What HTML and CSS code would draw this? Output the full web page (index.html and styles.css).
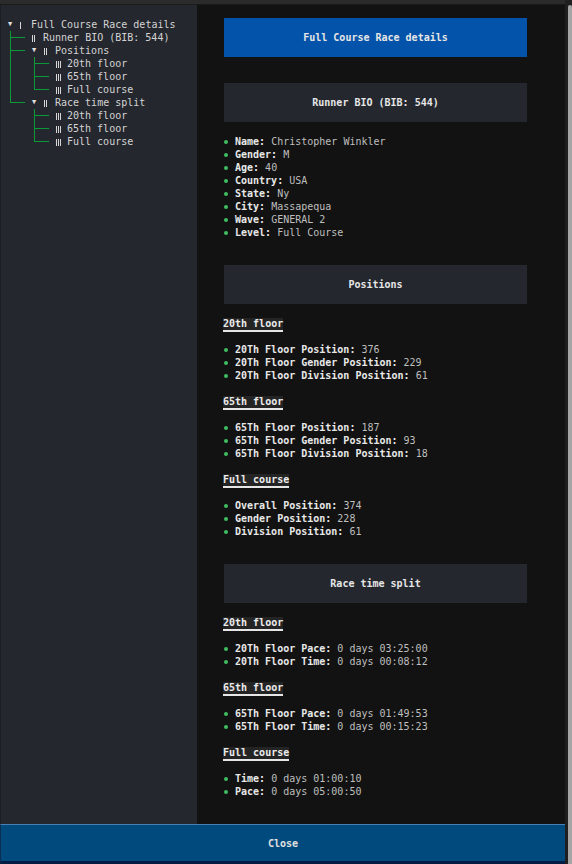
FILE: index.html
```html
<!DOCTYPE html>
<html>
<head>
<meta charset="utf-8">
<link rel="stylesheet" href="styles.css">
</head>
<body>
<div class="app">
  <div class="window">
    <div class="topbar"></div>
    <div class="panes">
      <aside class="sidebar">
        <div class="tree">
          <div class="row"><span class="arrow">▼</span><span class="sp"></span><span class="num n1" title="Ⅰ"></span><span class="sp"></span><span class="lbl">Full Course Race details</span></div>
          <div class="row"><span class="g g-tee"></span><span class="num n2" title="Ⅱ"></span><span class="sp"></span><span class="lbl">Runner BIO (BIB: 544)</span></div>
          <div class="row"><span class="g g-tee"></span><span class="arrow">▼</span><span class="sp"></span><span class="num n2" title="Ⅱ"></span><span class="sp"></span><span class="lbl">Positions</span></div>
          <div class="row"><span class="g g-pipe"></span><span class="g g-tee"></span><span class="num n3" title="Ⅲ"></span><span class="sp"></span><span class="lbl">20th floor</span></div>
          <div class="row"><span class="g g-pipe"></span><span class="g g-tee"></span><span class="num n3" title="Ⅲ"></span><span class="sp"></span><span class="lbl">65th floor</span></div>
          <div class="row"><span class="g g-pipe"></span><span class="g g-end"></span><span class="num n3" title="Ⅲ"></span><span class="sp"></span><span class="lbl">Full course</span></div>
          <div class="row"><span class="g g-end"></span><span class="arrow">▼</span><span class="sp"></span><span class="num n2" title="Ⅱ"></span><span class="sp"></span><span class="lbl">Race time split</span></div>
          <div class="row"><span class="g"></span><span class="g g-tee"></span><span class="num n3" title="Ⅲ"></span><span class="sp"></span><span class="lbl">20th floor</span></div>
          <div class="row"><span class="g"></span><span class="g g-tee"></span><span class="num n3" title="Ⅲ"></span><span class="sp"></span><span class="lbl">65th floor</span></div>
          <div class="row"><span class="g"></span><span class="g g-end"></span><span class="num n3" title="Ⅲ"></span><span class="sp"></span><span class="lbl">Full course</span></div>
        </div>
      </aside>
      <main class="content">
        <h1 class="h1 mb2">Full Course Race details</h1>

        <h2 class="h2 mb1">Runner BIO (BIB: 544)</h2>
        <ul class="list mb2">
          <li><b>Name:</b> Christopher Winkler</li>
          <li><b>Gender:</b> M</li>
          <li><b>Age:</b> 40</li>
          <li><b>Country:</b> USA</li>
          <li><b>State:</b> Ny</li>
          <li><b>City:</b> Massapequa</li>
          <li><b>Wave:</b> GENERAL 2</li>
          <li><b>Level:</b> Full Course</li>
        </ul>

        <h2 class="h2 mb1">Positions</h2>
        <h3 class="h3 mb1"><span>20th floor</span></h3>
        <ul class="list mb1">
          <li><b>20Th Floor Position:</b> 376</li>
          <li><b>20Th Floor Gender Position:</b> 229</li>
          <li><b>20Th Floor Division Position:</b> 61</li>
        </ul>
        <h3 class="h3 mb1"><span>65th floor</span></h3>
        <ul class="list mb1">
          <li><b>65Th Floor Position:</b> 187</li>
          <li><b>65Th Floor Gender Position:</b> 93</li>
          <li><b>65Th Floor Division Position:</b> 18</li>
        </ul>
        <h3 class="h3 mb1"><span>Full course</span></h3>
        <ul class="list mb2">
          <li><b>Overall Position:</b> 374</li>
          <li><b>Gender Position:</b> 228</li>
          <li><b>Division Position:</b> 61</li>
        </ul>

        <h2 class="h2 mb1">Race time split</h2>
        <h3 class="h3 mb1"><span>20th floor</span></h3>
        <ul class="list mb1">
          <li><b>20Th Floor Pace:</b> 0 days 03:25:00</li>
          <li><b>20Th Floor Time:</b> 0 days 00:08:12</li>
        </ul>
        <h3 class="h3 mb1"><span>65th floor</span></h3>
        <ul class="list mb1">
          <li><b>65Th Floor Pace:</b> 0 days 01:49:53</li>
          <li><b>65Th Floor Time:</b> 0 days 00:15:23</li>
        </ul>
        <h3 class="h3 mb1"><span>Full course</span></h3>
        <ul class="list">
          <li><b>Time:</b> 0 days 01:00:10</li>
          <li><b>Pace:</b> 0 days 05:00:50</li>
        </ul>
      </main>
    </div>
    <div class="closebar"><span>Close</span></div>
  </div>
  <div class="scrollbar"><div class="thumb"></div></div>
</div>
</body>
</html>
```

FILE: styles.css
```css
* { box-sizing: border-box; }
html, body {
  margin: 0;
  padding: 0;
  background: #121212;
}
body {
  font-family: "DejaVu Sans Mono", "Liberation Mono", monospace;
  font-size: 10px;
  line-height: 13px;
  color: #c4c4c4;
  width: 572px;
  height: 864px;
  overflow: hidden;
}
.app {
  display: flex;
  width: 572px;
  height: 864px;
}
.window {
  width: 565px;
  display: flex;
  flex-direction: column;
}
.topbar {
  height: 5px;
  background: #2b2b2b;
  border-bottom: 1px solid #1a1a1a;
}
.panes {
  display: flex;
  height: 819px;
}
.sidebar {
  width: 197px;
  background: #24272e;
  border-left: 1px solid #1b1d22;
  padding: 13px 0 0 6px;
}
.tree .row {
  display: flex;
  height: 13px;
  white-space: pre;
  color: #d4d4d4;
}
.g {
  width: 24px;
  height: 13px;
  flex: none;
}
.g-pipe {
  background: linear-gradient(#0b9a37, #0b9a37) 3px 0 / 1px 13px no-repeat;
}
.g-tee {
  background:
    linear-gradient(#0b9a37, #0b9a37) 3px 0 / 1px 13px no-repeat,
    linear-gradient(#0b9a37, #0b9a37) 4px 6px / 14px 1px no-repeat;
}
.g-end {
  background:
    linear-gradient(#0b9a37, #0b9a37) 3px 0 / 1px 7px no-repeat,
    linear-gradient(#0b9a37, #0b9a37) 4px 6px / 14px 1px no-repeat;
}
.arrow {
  width: 6px;
  flex: none;
  font-size: 7px;
  text-align: center;
  color: #e0e0e0;
}
.num {
  width: 6px;
  height: 13px;
  flex: none;
}
.n1 {
  background: linear-gradient(#d6d6d6, #d6d6d6) 1px 4px / 1px 7px no-repeat;
}
.n2 {
  background:
    linear-gradient(#d6d6d6, #d6d6d6) 1px 4px / 1px 7px no-repeat,
    linear-gradient(#d6d6d6, #d6d6d6) 3px 4px / 1px 7px no-repeat;
}
.n3 {
  background:
    linear-gradient(#d6d6d6, #d6d6d6) 1px 4px / 1px 7px no-repeat,
    linear-gradient(#d6d6d6, #d6d6d6) 3px 4px / 1px 7px no-repeat,
    linear-gradient(#d6d6d6, #d6d6d6) 5px 4px / 1px 7px no-repeat;
}
.sp { width: 6px; flex: none; }

.content {
  flex: 1;
  padding: 13px 38px 0 26px;
}
.h1, .h2 {
  margin: 0 0 0 1px;
  height: 39px;
  width: 303px;
  display: flex;
  align-items: center;
  justify-content: center;
  font-size: 10px;
  font-weight: bold;
  color: #e6e6e6;
}
.h1 { background: #0253a9; }
.h2 { background: #24272e; }
.h3 {
  margin: 0;
  height: 13px;
  font-size: 10px;
  font-weight: bold;
  color: #ececec;
}
.h3 span {
  display: inline-block;
  height: 14px;
  line-height: 12px;
  background: #242424;
  border-bottom: 2px solid #e6e6e6;
}
.list {
  list-style: none;
  margin: 0;
  padding: 0;
}
.list li {
  height: 13px;
  white-space: pre;
  color: #bfbfbf;
}
.list li::before {
  content: "";
  display: inline-block;
  width: 4px;
  height: 4px;
  border-radius: 50%;
  background: #3fbf63;
  margin: 0 7px 1px 1px;
  vertical-align: middle;
}
.list b {
  color: #e8e8e8;
}
.mb1 { margin-bottom: 13px; }
.mb2 { margin-bottom: 26px; }

.closebar {
  height: 40px;
  background: #014a7e;
  border-top: 1px solid #4a7fb4;
  border-bottom: 3px solid #021c44;
  border-left: 1px solid #0a2f52;
  display: flex;
  align-items: center;
  justify-content: center;
  font-weight: bold;
  color: #e0e0e0;
  padding-top: 1px;
}
.scrollbar {
  width: 7px;
  background: #1f1f1f;
  display: flex;
  justify-content: flex-end;
  padding-top: 5px;
}
.thumb {
  width: 4px;
  height: 859px;
  background: #a5a5a5;
  border-radius: 3px 3px 0 0;
}
```
